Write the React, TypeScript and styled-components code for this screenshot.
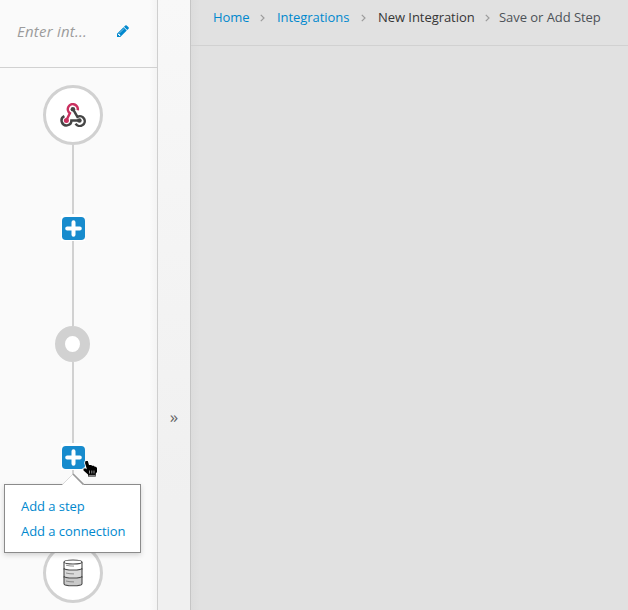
import React from "react";
import styled, { createGlobalStyle } from "styled-components";

const GlobalStyle = createGlobalStyle`
  * { box-sizing: border-box; }
  body {
    margin: 0;
    overflow: hidden;
    font-family: "Open Sans", sans-serif;
    font-size: 13px;
    line-height: 20px;
    letter-spacing: -0.05px;
    color: #363636;
  }
`;

const Page = styled.div`
  display: flex;
  width: 100%;
  height: 100vh;
  overflow: hidden;
  background: #e1e1e1;
`;

const Sidebar = styled.aside`
  flex: 0 0 158px;
  display: flex;
  flex-direction: column;
  background: linear-gradient(to right, #fafafa 150px, #f4f4f4 157px);
  border-right: 1px solid #cfcfcf;
`;

const NameBar = styled.header`
  flex: 0 0 68px;
  display: flex;
  align-items: flex-start;
  padding: 21px 0 0 17px;
  border-bottom: 1px solid #d1d1d1;
`;

const NameField = styled.span`
  width: 99px;
  color: #9c9c9c;
  font-size: 15px;
  line-height: 21px;
  font-style: italic;
  letter-spacing: 0.22px;
`;

const EditIcon = styled.svg`
  width: 14px;
  height: 14px;
  margin-top: 3px;
  fill: #0088ce;
`;

const Flow = styled.div`
  display: flex;
  flex-direction: column;
  align-items: center;
  width: 146px;
  padding-top: 17px;
`;

const Endpoint = styled.div`
  flex: none;
  display: flex;
  align-items: center;
  justify-content: center;
  width: 60px;
  height: 60px;
  padding-right: 1px;
  border: 3px solid #d1d1d1;
  border-radius: 50%;
  background: #fff;
`;

const Connector = styled.div<{ $length: number }>`
  flex: none;
  width: 2px;
  height: ${(p) => p.$length}px;
  background: #d1d1d1;
`;

const EmptyStep = styled.div`
  flex: none;
  width: 35px;
  height: 36px;
  margin-right: 1px;
  border: 10px solid #d1d1d1;
  border-radius: 50%;
  background: #fff;
`;

const AddSlot = styled.div`
  position: relative;
  flex: none;
  width: 24px;
  height: 27px;
  padding: 3px 0 0 1px;
  background: #fff;
  svg { display: block; }
`;

const Popover = styled.div`
  position: absolute;
  top: 41px;
  left: -57px;
  width: 137px;
  height: 69px;
  padding: 9px 16px;
  border: 1px solid #8b8b8b;
  background: #fff;
  box-shadow: 0 2px 5px rgba(0, 0, 0, 0.16);
  z-index: 1;
`;

const PopoverArrow = styled.svg`
  position: absolute;
  top: -13px;
  left: 55px;
`;

const MenuLink = styled.a`
  display: block;
  line-height: 25px;
  color: #0088ce;
  white-space: nowrap;
`;

const Pointer = styled.svg`
  position: absolute;
  left: 21px;
  top: 17px;
  z-index: 2;
`;

const Collapse = styled.button`
  flex: 0 0 33px;
  display: flex;
  align-items: flex-start;
  justify-content: center;
  padding: 407px 0 0;
  border: 0;
  border-right: 1px solid #c5c5c5;
  background: linear-gradient(#f8f8f8 0, #f7f7f7 60px, #f0f0f0 500px);
  color: #666;
  font: 17px/20px "Open Sans", sans-serif;
`;

const Main = styled.main`
  flex: 1;
  background: linear-gradient(to right, #dcdcdc, #e1e1e1 9px);
`;

const Breadcrumb = styled.nav`
  display: flex;
  align-items: flex-start;
  height: 46px;
  padding: 7px 0 0 22px;
  border-bottom: 1px solid #d1d1d1;
  white-space: nowrap;
`;

const Crumb = styled.span<{ $width?: number; $color: string }>`
  flex: none;
  width: ${(p) => (p.$width ? `${p.$width}px` : "auto")};
  color: ${(p) => p.$color};
`;

const Separator = styled.svg<{ $gap: number }>`
  flex: none;
  width: 5px;
  height: 8px;
  margin: 7px ${(p) => p.$gap}px 0 0;
`;

const Pencil = () => (
  <EditIcon viewBox="0 0 1792 1792">
    <path d="M491 1536l91-91-235-235-91 91v107h128v128h107zm523-928q0-22-22-22-10 0-17 7l-542 542q-7 7-7 17 0 22 22 22 10 0 17-7l542-542q7-7 7-17zm-54-192l416 416-832 832h-416v-416zm683 96q0 53-37 90l-166 166-416-416 166-165q36-38 90-38 53 0 91 38l235 234q37 39 37 91z" />
  </EditIcon>
);

const Plus = () => (
  <svg width="23" height="23" viewBox="0 0 23 23">
    <rect width="23" height="23" rx="3.8" fill="#178bcd" />
    <path d="M11.5 5.2v12.6M5.2 11.5h12.6" stroke="#fff" strokeWidth="4" strokeLinecap="round" />
  </svg>
);

const Chevron = ({ gap }: { gap: number }) => (
  <Separator $gap={gap} viewBox="0 0 5 8">
    <path d="M.8.8 4 4 .8 7.2" fill="none" stroke="#9c9c9c" strokeWidth="1.2" />
  </Separator>
);

const WebhookIcon = () => (
  <svg width="26" height="24" viewBox="0 0 26 24" fill="none" strokeWidth="2.5">
    <path d="M17.7 7.3A5 5 0 1 0 9.9 10.2L6.5 17" stroke="#c9305f" />
    <path d="M13 6.2l4.4 7.6A4.9 4.9 0 1 1 15.6 20.6" stroke="#454545" />
    <path d="M4.4 13.1A4.9 4.9 0 1 0 11.4 17.6H19" stroke="#454545" />
    <circle cx="12.9" cy="6.3" r="2.3" fill="#454545" />
    <circle cx="6.4" cy="17.5" r="2.5" fill="#c9305f" />
    <circle cx="19.4" cy="17.5" r="2.3" fill="#454545" />
  </svg>
);

const DatabaseIcon = () => (
  <svg width="20" height="28" viewBox="0 0 20 28" stroke="#4a4a4a" strokeWidth="1.1">
    <path d="M1 18.4v6.3c0 2.7 18 2.7 18 0v-6.3" fill="#c9c9c9" />
    <path d="M1 10.6v6.4c0 2.7 18 2.7 18 0v-6.4" fill="#dadada" />
    <path d="M1 3v6c0 2.7 18 2.7 18 0V3" fill="#fff" />
    <ellipse cx="10" cy="3" rx="9" ry="2" fill="#fff" />
    <path d="M1 9v2M19 9v2M1 17v2M19 17v2" />
    <path d="M3 6.2q4 1 8 .9M3 14q4 1 8 .9M3 22q4 1 8 .9" stroke="#777" strokeWidth=".8" fill="none" />
  </svg>
);

const HandPointer = () => (
  <Pointer width="18" height="18" viewBox="0 0 18 18">
    <path
      d="M3.5 1H5.8L7 5H9.3L10 5.8H12L12.7 6.8H14L15 8V12L13.8 13.5V16.5H6V14.5L1.5 10.5V8.5H4L5 9.5L3 3Z"
      fill="#000" stroke="#fff" strokeWidth="1.6" strokeLinejoin="round" paintOrder="stroke"
    />
    <path d="M7.5 10.5v3M9.8 10.5v3M12 10.5v3M6.5 15.4h7" stroke="#bbb" strokeWidth=".8" />
  </Pointer>
);

export default function App() {
  return (
    <Page>
      <GlobalStyle />
      <Sidebar>
        <NameBar>
          <NameField>Enter int...</NameField>
          <Pencil />
        </NameBar>
        <Flow>
          <Endpoint><WebhookIcon /></Endpoint>
          <Connector $length={69} />
          <AddSlot><Plus /></AddSlot>
          <Connector $length={85} />
          <EmptyStep />
          <Connector $length={81} />
          <AddSlot>
            <Plus />
            <Popover>
              <PopoverArrow width="28" height="13" viewBox="0 0 28 13">
                <path d="M2 13 13 2l11 11Z" fill="#fff" />
                <path d="m2.5 12.5 10-10" stroke="#ccc" strokeWidth=".7" />
                <path d="m13 2 10.5 10.5" stroke="#999" strokeWidth="1.7" />
              </PopoverArrow>
              <MenuLink>Add a step</MenuLink>
              <MenuLink>Add a connection</MenuLink>
            </Popover>
            <HandPointer />
          </AddSlot>
          <Connector $length={73} />
          <Endpoint><DatabaseIcon /></Endpoint>
        </Flow>
      </Sidebar>
      <Collapse aria-label="Expand panel">»</Collapse>
      <Main>
        <Breadcrumb>
          <Crumb $width={47} $color="#0088ce">Home</Crumb>
          <Chevron gap={12} />
          <Crumb $width={84} $color="#0088ce">Integrations</Crumb>
          <Chevron gap={12} />
          <Crumb $width={107} $color="#363636">New Integration</Crumb>
          <Chevron gap={9} />
          <Crumb $color="#4d5258">Save or Add Step</Crumb>
        </Breadcrumb>
      </Main>
    </Page>
  );
}
